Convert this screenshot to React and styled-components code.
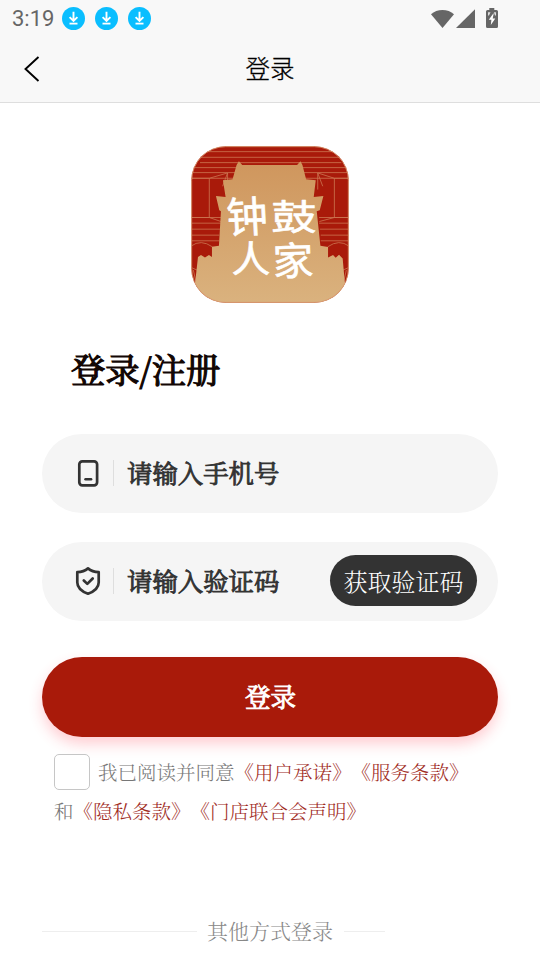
import styled, { createGlobalStyle } from "styled-components";

export default function App() {
	return (
		<Page lang="zh-CN">
			<GlobalStyle />
			<Header>
				<StatusBar>
					<Clock>3:19</Clock>
					<Downloads>
						{[0, 1, 2].map(i => (
							<DownloadIcon key={i} />
						))}
					</Downloads>
					<SystemIcons />
				</StatusBar>
				<NavBar>
					<BackButton aria-label="返回">
						<svg width="18" height="28" viewBox="0 0 18 28" fill="none">
							<path d="M15.5 2 2.5 14l13 12" stroke="#000" strokeWidth="1.9" />
						</svg>
					</BackButton>
					<NavTitle>登录</NavTitle>
				</NavBar>
			</Header>
			<Main>
				<Logo />
				<Heading>登录/注册</Heading>
				<Field>
					<FieldIcon>
						<svg width="28" height="30" viewBox="0 0 28 30" fill="none" stroke="#333">
							<rect x="5.3" y="3.3" width="17.8" height="24" rx="3" strokeWidth="2.7" />
							<path d="M11.5 21.2h5.6" strokeWidth="2.5" strokeLinecap="round" />
						</svg>
					</FieldIcon>
					<Placeholder>请输入手机号</Placeholder>
				</Field>
				<Field>
					<FieldIcon>
						<svg
							width="28"
							height="30"
							viewBox="0 0 28 30"
							fill="none"
							stroke="#333"
							strokeWidth="2.7"
							strokeLinejoin="round"
							strokeLinecap="round"
						>
							<path d="M14 2.4C11 4.9 7.6 6 3.3 6.2v10.2c0 4.8 3.9 8.7 10.7 11.3 6.8-2.6 10.7-6.5 10.7-11.3V6.2C20.4 6 17 4.9 14 2.4Z" />
							<path d="m9.8 14.5 3.5 3.4 5.4-5.4" />
						</svg>
					</FieldIcon>
					<Placeholder>请输入验证码</Placeholder>
					<CodeButton>获取验证码</CodeButton>
				</Field>
				<SubmitButton>登录</SubmitButton>
				<Terms>
					<Checkbox />
					我已阅读并同意<TermsLink>《用户承诺》</TermsLink>
					<TermsLink>《服务条款》</TermsLink>
					<br />和<TermsLink>《隐私条款》</TermsLink>
					<TermsLink>《门店联合会声明》</TermsLink>
				</Terms>
				<OtherWays>
					<Rule $width={155} />
					<span>其他方式登录</span>
					<Rule $width={41} />
				</OtherWays>
			</Main>
		</Page>
	);
}

function DownloadIcon() {
	return (
		<svg width="23" height="23" viewBox="0 0 23 23" fill="none" stroke="#fff">
			<circle cx="11.5" cy="11.5" r="11.5" fill="#0abeff" stroke="none" />
			<path d="M11.5 4.8v8.8M7.6 10.1l3.9 3.9 3.9-3.9" strokeWidth="1.9" />
			<path d="M7.5 16.6h8" strokeWidth="1.8" />
		</svg>
	);
}

function SystemIcons() {
	return (
		<svg width="70" height="22" viewBox="0 0 70 22" fill="#666">
			<path d="M0 6.3C5.8.5 17.2.5 23 6.3L11.5 20Z" />
			<path d="M44 1.2V20H25Z" />
			<path d="M58.3 0h5v2h2.2q1.5 0 1.5 1.5v15q0 1.5-1.5 1.5h-9q-1.5 0-1.5-1.5v-15q0-1.5 1.5-1.5h1.8Z" />
			<path d="m62.3 5.5-4.5 6.3h2.6l-.6 5.2 4.5-6.5h-2.6l1-5Z" fill="#fff" />
			<path d="M57 4.2h2.5l-1.5 3.3h-1ZM62.8 4.2h2.2v3.3h-1Z" fill="#ddd" />
		</svg>
	);
}

function Logo() {
	return (
		<LogoSvg viewBox="33 29 475 472">
			<defs>
				<linearGradient id="gold" x1="0" y1="0" x2="0" y2="1">
					<stop offset="0" stopColor="#cf965d" />
					<stop offset="1" stopColor="#dab27e" />
				</linearGradient>
				<clipPath id="tile">
					<rect x="34" y="30" width="473" height="470" rx="103" />
				</clipPath>
			</defs>
			<g clipPath="url(#tile)">
				<rect x="33" y="29" width="475" height="472" fill="#a91a0a" />
				<g fill="none" stroke="#cb7350" strokeWidth="2.5">
					<path d="M60 46h425M60 63h425M60 79h425M33 94h475M33 109h475M33 126h475" />
					<path d="M33 126h55v118h-55M88 126l55-16v50M88 244l35 12M143 110l-15 40" />
					<path d="M508 126h-44v118h44M464 126l-50-16v50M464 244l-45 12M414 110l15 40" />
					<path d="M33 244h90M33 261h90M33 279h87M33 297h85M33 314h85" />
					<path d="M508 244h-90M508 261h-90M508 279h-87M508 297h-85M508 314h-85" />
					<path d="M33 330q30-22 64 2M508 330q-30-22-64 2M33 394l18 8M508 394l-18 8M40 402l8 36M500 402l-8 36" />
				</g>
				<path
					d="M177 75L187 86H352L362 75L368 86L379 129L408 132L402 182L431 179L420 222L411 225L422 329L445 333V364L460 357L468 365L478 356L489 367L495 435L508 500H33L46 435L54 363L63 357L75 364L87 357L96 363V332L117 329L123 225L118 222L108 179L137 182L129 132L158 129L170 86Z"
					fill="url(#gold)"
				/>
				<LogoText>
					<text transform="translate(142 292) rotate(-3) scale(0.97 1)" fontSize="128">
						钟
					</text>
					<text transform="translate(274 283) scale(1 0.79)" fontSize="136">
						鼓
					</text>
					<text transform="translate(155 412) scale(1 0.95)" fontSize="117">
						人
					</text>
					<text transform="translate(280 419) rotate(-2) scale(1 0.96)" fontSize="122">
						家
					</text>
				</LogoText>
			</g>
			<rect
				x="35"
				y="31"
				width="471"
				height="468"
				rx="102"
				fill="none"
				stroke="#d99b70"
				strokeWidth="2.5"
			/>
		</LogoSvg>
	);
}

const GlobalStyle = createGlobalStyle`
	* {
		box-sizing: border-box;
	}
	body {
		margin: 0;
		background-color: #fff;
		font-family: "Noto Serif CJK SC", "Noto Sans CJK SC", sans-serif;
	}
	button {
		font: inherit;
		border: 0;
		padding: 0;
	}
`;

const Page = styled.div`
	height: 960px;
	overflow: hidden;
`;

const Header = styled.header`
	height: 103px;
	background-color: #f8f8f8;
	border-bottom: 1px solid #dedede;
`;

const StatusBar = styled.div`
	display: flex;
	align-items: center;
	height: 37px;
	padding: 0 39px 0 12px;
`;

const Clock = styled.span`
	width: 50px;
	font: 22px/37px Roboto, sans-serif;
	color: #666;
`;

const Downloads = styled.div`
	display: flex;
	gap: 10px;
	flex: 1;
`;

const NavBar = styled.nav`
	display: grid;
	grid-template-columns: 50px 1fr 50px;
	align-items: center;
	height: 63px;
`;

const BackButton = styled.button`
	display: flex;
	padding-left: 23px;
	background: none;
`;

const NavTitle = styled.h1`
	margin: 0;
	padding-bottom: 2px;
	font: 300 24.5px/36px "Noto Sans CJK SC", sans-serif;
	-webkit-text-stroke: 0.3px;
	text-align: center;
`;

const Main = styled.main`
	display: flex;
	flex-direction: column;
	padding: 43px 42px 0;
`;

const LogoSvg = styled.svg`
	width: 158px;
	height: 157px;
	margin: 0 auto;
`;

const LogoText = styled.g`
	fill: #fff;
	stroke: #fff;
	stroke-width: 2;
	stroke-linejoin: round;
	font-family: "Noto Sans CJK SC", sans-serif;
	font-weight: 400;
`;

const Heading = styled.h2`
	margin: 41px 0 40px 29px;
	font-size: 34.3px;
	line-height: 50px;
	font-weight: 400;
	-webkit-text-stroke: 1.2px;
	color: #120603;
`;

const Field = styled.div`
	display: flex;
	align-items: center;
	height: 79px;
	margin-bottom: 29px;
	padding: 0 21px 2px 32px;
	border-radius: 40px;
	background-color: #f5f5f5;
`;

const FieldIcon = styled.span`
	display: flex;
	width: 40px;
	height: 26px;
	align-items: center;
	border-right: 1px solid #dedede;
`;

const Placeholder = styled.span`
	flex: 1;
	padding-left: 13px;
	padding-bottom: 1px;
	font-size: 25.4px;
	font-weight: 400;
	-webkit-text-stroke: 0.9px;
	color: #333;
`;

const CodeButton = styled.button`
	width: 147px;
	height: 51px;
	border-radius: 26px;
	background-color: #333;
	color: #fff;
	font-size: 24px;
	font-weight: 300;
	line-height: 51px;
`;

const SubmitButton = styled.button`
	height: 80px;
	margin-top: 7px;
	padding: 0 0 3px 1px;
	border-radius: 40px;
	background-color: #a91a0a;
	box-shadow: 0 7px 14px rgba(255, 50, 70, 0.24);
	color: #fff;
	font-size: 25.6px;
	font-weight: 400;
	-webkit-text-stroke: 0.9px;
`;

const Terms = styled.p`
	margin: 16px 0 0 12px;
	font-size: 19.5px;
	font-weight: 300;
	line-height: 39px;
	white-space: nowrap;
	text-spacing-trim: space-all;
	color: #777;
`;

const Checkbox = styled.span`
	display: inline-block;
	width: 36px;
	height: 36px;
	margin: -6px 8px 0 0;
	border: 1px solid #c6c6c6;
	border-radius: 5px;
	background-color: #fff;
	vertical-align: middle;
`;

const TermsLink = styled.a`
	color: #a02a1c;
`;

const OtherWays = styled.div`
	display: flex;
	align-items: center;
	gap: 11px;
	margin-top: 86px;
	font-size: 21px;
	font-weight: 300;
	line-height: 32px;
	color: #888;

	span {
		margin: -3px 0 0 -1px;
	}
`;

const Rule = styled.i`
	width: ${props => props.$width}px;
	height: 1px;
	background-color: #eee;
`;
